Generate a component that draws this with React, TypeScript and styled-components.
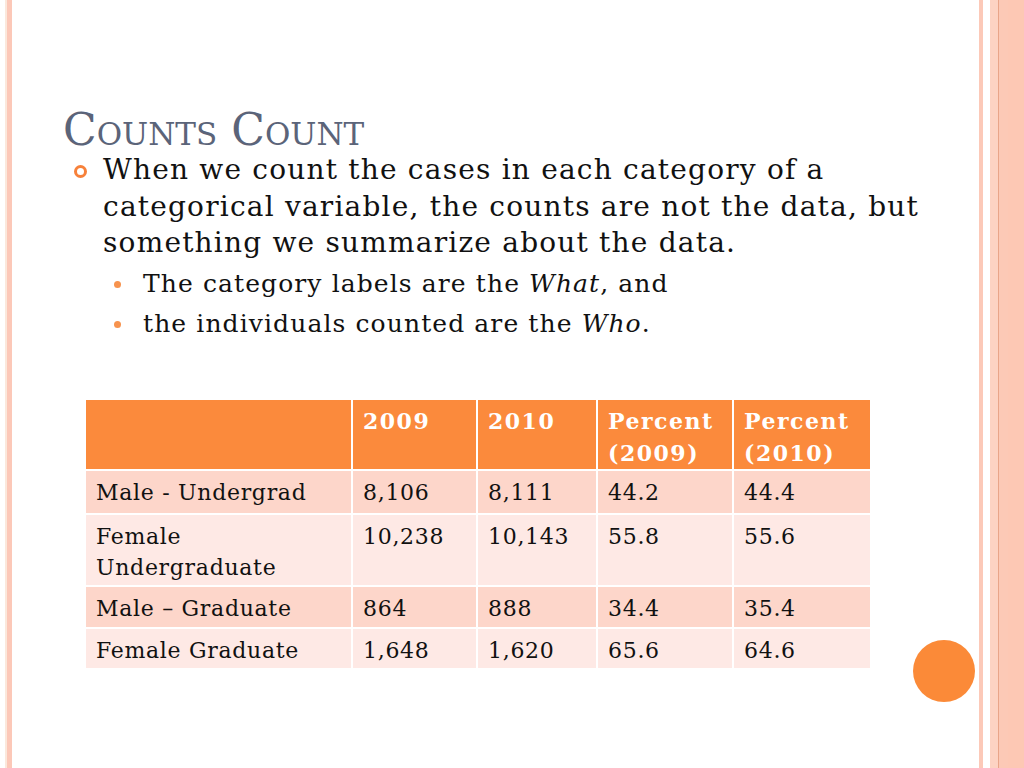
import React from "react";
import styled, { createGlobalStyle } from "styled-components";

const Global = createGlobalStyle`
  html, body { margin: 0; padding: 0; background: #ffffff; }
  body { font-family: "DejaVu Serif", "Liberation Serif", serif; }
`;

const Slide = styled.div`
  position: relative;
  width: 1024px;
  height: 768px;
  display: flex;
  overflow: hidden;
  background: #ffffff;
`;

const LeftRail = styled.div`
  width: 12px;
  flex: none;
  background: linear-gradient(
    to right,
    #ffffff 0 5px,
    #fbe8dc 5px 7px,
    #fcc8b8 7px 12px
  );
`;

const RightRail = styled.div`
  width: 46px;
  flex: none;
  background: linear-gradient(
    to right,
    #ffffff 0 1px,
    #fcc9b8 1px 5px,
    #ffffff 5px 12px,
    #fdd3c3 12px 20px,
    #e9a589 20px 21px,
    #fcc9b6 21px 30px,
    #fdc8b4 30px 46px
  );
`;

const Content = styled.main`
  flex: 1;
  padding: 108px 0 0 51px;
  display: flex;
  flex-direction: column;
`;

const Title = styled.h1`
  margin: 0;
  font-family: "DejaVu Serif", serif;
  font-weight: normal;
  font-size: 44px;
  line-height: 44px;
  color: #5b6479;
  font-variant: small-caps;
`;

const List = styled.ul`
  list-style: none;
  margin: 0;
  padding: 0;
  width: 880px;
`;

const SubList = styled.ul`
  list-style: none;
  margin: 2px 0 0 0;
  padding: 0;
`;

const Item = styled.li<{ $level: number }>`
  position: relative;
  font-size: ${(p) => (p.$level === 1 ? 28 : 25)}px;
  letter-spacing: ${(p) => (p.$level === 1 ? 1.2 : 1.1)}px;
  line-height: ${(p) => (p.$level === 1 ? 36.5 : 40)}px;
  color: #111111;
  padding-left: ${(p) => (p.$level === 1 ? 40 : 80)}px;
`;

const Ring = styled.span`
  position: absolute;
  left: 11px;
  top: 13px;
  width: 7px;
  height: 7px;
  border: 3px solid #f7813a;
  border-radius: 50%;
`;

const Dot = styled.span`
  position: absolute;
  left: 51px;
  top: 17px;
  width: 7px;
  height: 7px;
  background: #f7934e;
  border-radius: 50%;
`;

const TableWrap = styled.div`
  margin-top: 56px;
  margin-left: 23px;
`;

const Table = styled.table`
  border-collapse: collapse;
  table-layout: fixed;
  width: 784px;
  font-family: "DejaVu Serif", serif;
  font-size: 22px;
  letter-spacing: 0.7px;
  line-height: 31px;
`;

const HeadRow = styled.tr`
  height: 70px;
`;

const BodyRow = styled.tr<{ $h: number }>`
  height: ${(p) => p.$h}px;
`;

const HeadCell = styled.th`
  box-sizing: border-box;
  background: #fb8a3c;
  color: #ffffff;
  font-weight: bold;
  letter-spacing: 1.5px;
  line-height: 32px;
  text-align: left;
  vertical-align: top;
  padding: 5px 10px 0;
  border: 2px solid #ffffff;
  border-top: none;
  &:first-child { border-left: none; }
  &:last-child { border-right: none; }
`;

const Cell = styled.td<{ $alt: boolean }>`
  box-sizing: border-box;
  background: ${(p) => (p.$alt ? "#fee9e5" : "#fdd6ca")};
  color: #111111;
  text-align: left;
  vertical-align: top;
  padding: 6px 10px 0;
  border: 2px solid #ffffff;
  &:first-child { border-left: none; }
  &:last-child { border-right: none; }
`;

const Circle = styled.div`
  position: absolute;
  left: 913px;
  top: 640px;
  width: 62px;
  height: 62px;
  border-radius: 50%;
  background: #fb8a38;
`;

const widths = [266, 125, 120, 136, 137];

const headers: React.ReactNode[] = [
  "",
  "2009",
  "2010",
  <>Percent<br />(2009)</>,
  <>Percent<br />(2010)</>,
];

const rows: { h: number; cells: React.ReactNode[] }[] = [
  { h: 44, cells: ["Male - Undergrad", "8,106", "8,111", "44.2", "44.4"] },
  { h: 72, cells: [<>Female<br />Undergraduate</>, "10,238", "10,143", "55.8", "55.6"] },
  { h: 42, cells: ["Male \u2013 Graduate", "864", "888", "34.4", "35.4"] },
  { h: 41, cells: ["Female Graduate", "1,648", "1,620", "65.6", "64.6"] },
];

export default function App() {
  return (
    <>
      <Global />
      <Slide>
        <LeftRail />
        <Content>
          <Title>Counts Count</Title>
          <List>
            <Item $level={1}>
              <Ring />
              When we count the cases in each category of a categorical variable, the counts are not the data, but something we summarize about the data.
            </Item>
            <SubList>
              <Item $level={2}>
                <Dot />
                The category labels are the <i>What</i>, and
              </Item>
              <Item $level={2}>
                <Dot />
                the individuals counted are the <i>Who</i>.
              </Item>
            </SubList>
          </List>
          <TableWrap>
            <Table>
              <colgroup>
                {widths.map((w, i) => (
                  <col key={i} style={{ width: w }} />
                ))}
              </colgroup>
              <thead>
                <HeadRow>
                  {headers.map((h, i) => (
                    <HeadCell key={i}>{h}</HeadCell>
                  ))}
                </HeadRow>
              </thead>
              <tbody>
                {rows.map((r, ri) => (
                  <BodyRow key={ri} $h={r.h}>
                    {r.cells.map((c, ci) => (
                      <Cell key={ci} $alt={ri % 2 === 1}>{c}</Cell>
                    ))}
                  </BodyRow>
                ))}
              </tbody>
            </Table>
          </TableWrap>
        </Content>
        <RightRail />
        <Circle />
      </Slide>
    </>
  );
}
